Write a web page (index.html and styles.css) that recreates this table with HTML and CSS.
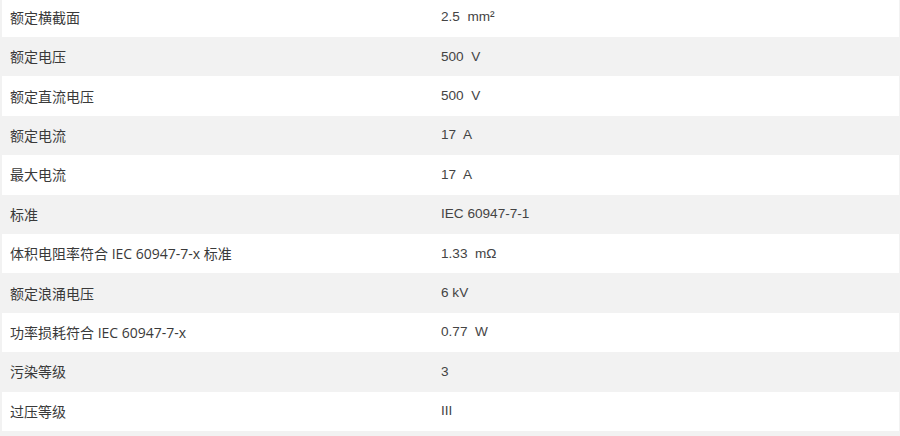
FILE: index.html
```html
<!DOCTYPE html>
<html lang="zh">
<head>
<meta charset="utf-8">
<link rel="stylesheet" href="styles.css">
</head>
<body>
<div class="specs">
  <div class="row odd"><div class="label">额定横截面</div><div class="value">2.5  mm²</div></div>
  <div class="row even"><div class="label">额定电压</div><div class="value">500  V</div></div>
  <div class="row odd"><div class="label">额定直流电压</div><div class="value">500  V</div></div>
  <div class="row even"><div class="label">额定电流</div><div class="value">17  A</div></div>
  <div class="row odd"><div class="label">最大电流</div><div class="value">17  A</div></div>
  <div class="row even"><div class="label">标准</div><div class="value">IEC 60947-7-1</div></div>
  <div class="row odd"><div class="label">体积电阻率符合 IEC 60947-7-x 标准</div><div class="value">1.33  mΩ</div></div>
  <div class="row even"><div class="label">额定浪涌电压</div><div class="value">6 kV</div></div>
  <div class="row odd"><div class="label">功率损耗符合 IEC 60947-7-x</div><div class="value">0.77  W</div></div>
  <div class="row even"><div class="label">污染等级</div><div class="value">3</div></div>
  <div class="row odd"><div class="label">过压等级</div><div class="value">III</div></div>
</div>
</body>
</html>
```
FILE: styles.css
```css
html, body {
  margin: 0;
  padding: 0;
  background: #f2f2f2;
  overflow: hidden;
}
.specs {
  margin-top: -2.4px;
  display: flex;
  flex-direction: column;
}
.row {
  height: 39.4px;
  display: grid;
  grid-template-columns: 429px 1fr;
  align-items: center;
  color: #3a3a3a;
}
.row.odd {
  background: #ffffff;
  margin: 0 1px 0 2px;
}
.row.even {
  background: #f2f2f2;
  padding: 0 1px 0 2px;
}
.label {
  padding-left: 8px;
  padding-bottom: 1px;
  font-family: "Open Sans", "Noto Sans CJK SC", sans-serif;
  font-size: 14px;
}
.value {
  padding-left: 10px;
  padding-bottom: 1px;
  font-family: "Liberation Sans", Arial, sans-serif;
  font-size: 13.6px;
  color: #444444;
  white-space: pre;
}
```
